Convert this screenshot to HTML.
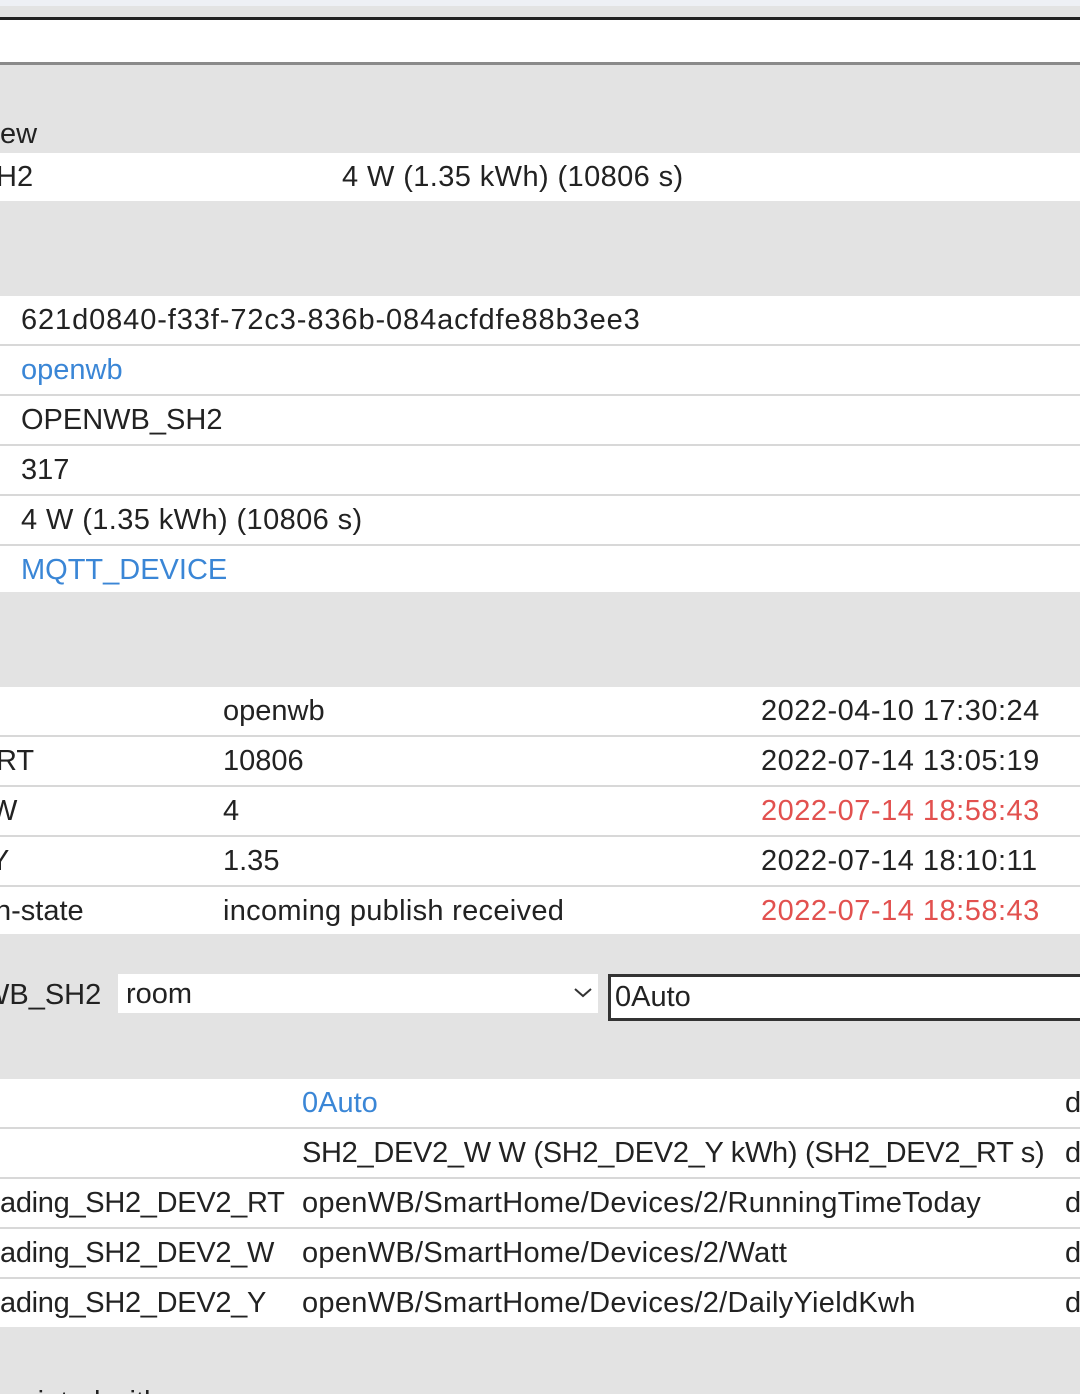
<!DOCTYPE html>
<html style="height:1394px;overflow:hidden"><head><meta charset="utf-8"><style>
*{margin:0;padding:0;box-sizing:border-box}
body{width:1080px;height:1394px;overflow:hidden;background:#e3e3e3;font-family:"Liberation Sans",sans-serif;font-size:29px;color:#222;position:relative}
.a{position:absolute;white-space:nowrap}
.w{position:absolute;left:0;width:1080px;background:#fff}
.t{position:absolute;line-height:48px;white-space:nowrap}
.b{color:#3a86d6}.r{color:#e2514f}
.sep{position:absolute;left:0;width:1080px;height:2px;background:#d8d8d8}
</style></head><body>
<div class="a" style="left:0;top:0;width:1080px;height:6px;background:#eef0f5"></div>
<div class="a" style="left:0;top:17px;width:1080px;height:3px;background:#222"></div>
<div class="w" style="top:20px;height:42px"></div>
<div class="a" style="left:0;top:62px;width:1080px;height:3px;background:#8a8a8a"></div>

<div class="t" style="left:0;top:110px">ew</div>
<div class="w" style="top:153px;height:48px"></div>
<div class="t" style="left:-4px;top:153px">H2</div>
<div class="t" style="left:342px;top:153px;letter-spacing:0.4px">4 W (1.35 kWh) (10806 s)</div>

<div class="w" style="top:296px;height:296px"></div>
<div class="sep" style="top:344px"></div><div class="sep" style="top:394px"></div><div class="sep" style="top:444px"></div><div class="sep" style="top:494px"></div><div class="sep" style="top:544px"></div>
<div class="t" style="left:21px;top:296px;letter-spacing:0.9px">621d0840-f33f-72c3-836b-084acfdfe88b3ee3</div>
<div class="t b" style="left:21px;top:346px">openwb</div>
<div class="t" style="left:21px;top:396px">OPENWB_SH2</div>
<div class="t" style="left:21px;top:446px">317</div>
<div class="t" style="left:21px;top:496px;letter-spacing:0.4px">4 W (1.35 kWh) (10806 s)</div>
<div class="t b" style="left:21px;top:546px">MQTT_DEVICE</div>

<div class="w" style="top:687px;height:247px"></div>
<div class="sep" style="top:735px"></div><div class="sep" style="top:785px"></div><div class="sep" style="top:835px"></div><div class="sep" style="top:885px"></div>
<div class="t" style="left:223px;top:687px">openwb</div><div class="t" style="left:761px;top:687px;letter-spacing:0.5px">2022-04-10 17:30:24</div>
<div class="t" style="left:-4px;top:737px">RT</div><div class="t" style="left:223px;top:737px">10806</div><div class="t" style="left:761px;top:737px;letter-spacing:0.5px">2022-07-14 13:05:19</div>
<div class="t" style="left:-10px;top:787px">W</div><div class="t" style="left:223px;top:787px">4</div><div class="t r" style="left:761px;top:787px;letter-spacing:0.5px">2022-07-14 18:58:43</div>
<div class="t" style="left:-10px;top:837px">Y</div><div class="t" style="left:223px;top:837px">1.35</div><div class="t" style="left:761px;top:837px;letter-spacing:0.5px">2022-07-14 18:10:11</div>
<div class="t" style="left:-5px;top:887px">n-state</div><div class="t" style="left:223px;top:887px;letter-spacing:0.3px">incoming publish received</div><div class="t r" style="left:761px;top:887px;letter-spacing:0.5px">2022-07-14 18:58:43</div>

<div class="t" style="left:-18px;top:971px">WB_SH2</div>
<div class="a" style="left:118px;top:974px;width:480px;height:39px;background:#fff"></div>
<div class="t" style="left:126px;top:970px">room</div>
<svg class="a" style="left:573px;top:987px" width="20" height="12"><path d="M2 2 L10 9 L18 2" fill="none" stroke="#333" stroke-width="2"/></svg>
<div class="a" style="left:608px;top:974px;width:480px;height:47px;background:#fff;border:3px solid #333"></div>
<div class="t" style="left:615px;top:973px">0Auto</div>

<div class="w" style="top:1079px;height:248px"></div>
<div class="sep" style="top:1127px"></div><div class="sep" style="top:1177px"></div><div class="sep" style="top:1227px"></div><div class="sep" style="top:1277px"></div>
<div class="t b" style="left:302px;top:1079px">0Auto</div><div class="t" style="left:1065px;top:1079px">d</div>
<div class="t" style="left:302px;top:1129px;letter-spacing:-0.3px">SH2_DEV2_W W (SH2_DEV2_Y kWh) (SH2_DEV2_RT s)</div><div class="t" style="left:1065px;top:1129px">d</div>
<div class="t" style="left:0;top:1179px;letter-spacing:-0.3px">ading_SH2_DEV2_RT</div><div class="t" style="left:302px;top:1179px;letter-spacing:0.3px">openWB/SmartHome/Devices/2/RunningTimeToday</div><div class="t" style="left:1065px;top:1179px">d</div>
<div class="t" style="left:0;top:1229px;letter-spacing:-0.3px">ading_SH2_DEV2_W</div><div class="t" style="left:302px;top:1229px;letter-spacing:0.3px">openWB/SmartHome/Devices/2/Watt</div><div class="t" style="left:1065px;top:1229px">d</div>
<div class="t" style="left:0;top:1279px;letter-spacing:-0.3px">ading_SH2_DEV2_Y</div><div class="t" style="left:302px;top:1279px;letter-spacing:0.3px">openWB/SmartHome/Devices/2/DailyYieldKwh</div><div class="t" style="left:1065px;top:1279px">d</div>

<div class="t" style="left:-22px;top:1378px">ssociated with</div>
</body></html>
